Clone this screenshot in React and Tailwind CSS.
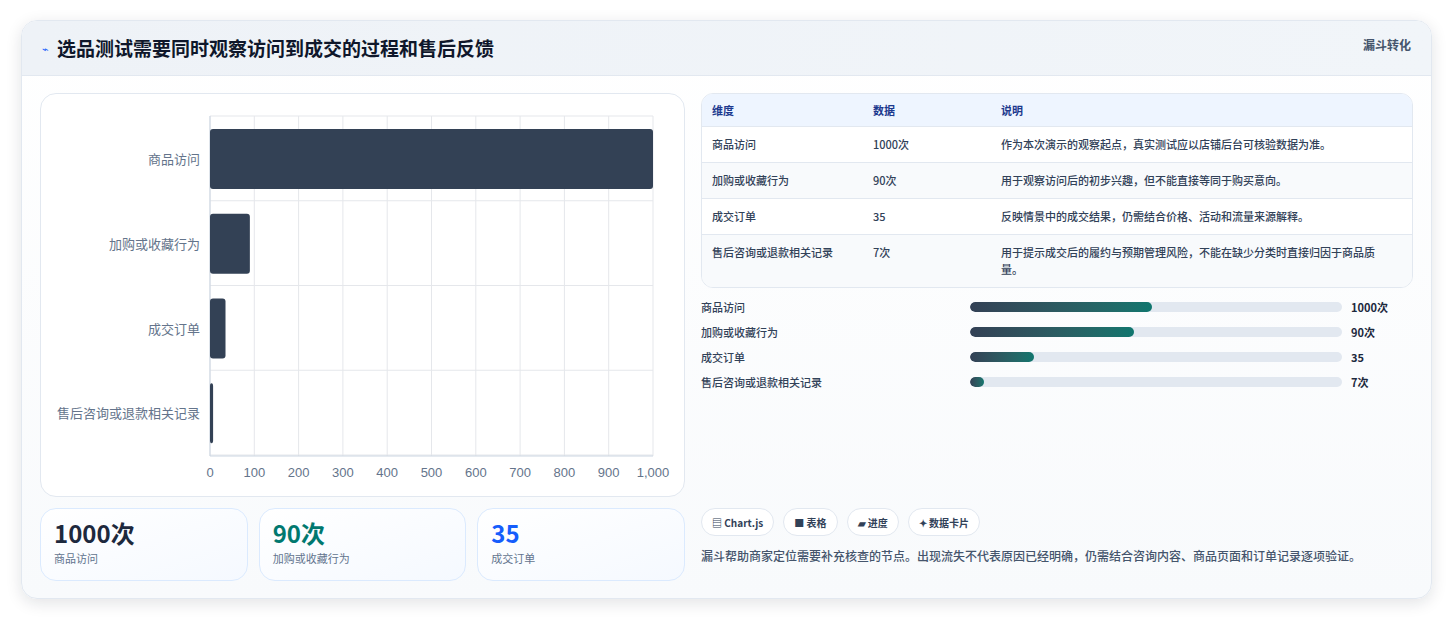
const F = { fontFamily: '"Noto Sans CJK SC", "Noto Sans", sans-serif' };

const rows = [
  { name: "商品访问", v: 1000, d: "1000次", desc: "作为本次演示的观察起点，真实测试应以店铺后台可核验数据为准。", w: 182 },
  { name: "加购或收藏行为", v: 90, d: "90次", desc: "用于观察访问后的初步兴趣，但不能直接等同于购买意向。", w: 164 },
  { name: "成交订单", v: 35, d: "35", desc: "反映情景中的成交结果，仍需结合价格、活动和流量来源解释。", w: 64 },
  { name: "售后咨询或退款相关记录", v: 7, d: "7次", desc: "用于提示成交后的履约与预期管理风险，不能在缺少分类时直接归因于商品质量。", w: 14 },
];

function Chart() {
  const x0 = 209, W = 443, top = 115, rh = 84.75;
  return (
    <svg width="644" height="403" className="block" style={{ position: "absolute", left: 0, top: 0 }}>
      {Array.from({ length: 11 }).map((_, i) => {
        const x = x0 - 40 + W * i / 10;
        return <g key={i}>
          <line x1={x} x2={x} y1={top - 93 + 0} y2={455 - 93} stroke="#e5e7eb" />
          <text x={x} y={471 - 93 + 5} textAnchor="middle" fontSize="13" fill="#64748b" fontFamily="Liberation Sans, sans-serif">{i === 10 ? "1,000" : i * 100}</text>
        </g>;
      })}
      {[0, 1, 2, 3, 4].map(i => <line key={i} x1={x0 - 40} x2={x0 - 40 + W} y1={top - 93 + rh * i} y2={top - 93 + rh * i} stroke="#e5e7eb" />)}
      <line x1={x0 - 40} x2={x0 - 40} y1={22} y2={362} stroke="#cbd5e1" />
      <line x1={x0 - 40} x2={x0 - 40 + W} y1={362} y2={362} stroke="#cbd5e1" />
      {rows.map((r, i) => {
        const y = top - 93 + rh * i + 13;
        return <g key={i}>
          <rect x={x0 - 40} y={y} width={Math.max(3, W * r.v / 1000)} height={60} rx="3" fill="#334155" />
          <text x={x0 - 50} y={y + 35} textAnchor="end" fontSize="13" fill="#64748b" style={F}>{r.name}</text>
        </g>;
      })}
    </svg>
  );
}

export default function App() {
  return (
    <div className="w-[1453px] h-[621px] bg-white pt-[20px] px-[21px]" style={F}>
      <div className="w-[1411px] h-[579px] rounded-2xl border border-slate-200 shadow-[0_4px_16px_rgba(15,23,42,0.12)] overflow-hidden bg-gradient-to-b from-white to-[#f8fafc]">
        <div className="h-[55px] flex items-center justify-between px-5 bg-gradient-to-r from-[#eef2f7] to-[#f1f5f9] border-b border-slate-200">
          <div className="flex items-center gap-2">
            <span className="text-[11px] text-blue-600">⌁</span>
            <span className="text-[19px] font-bold text-slate-900">选品测试需要同时观察访问到成交的过程和售后反馈</span>
          </div>
          <span className="text-[12px] font-bold text-slate-600 self-start mt-[15px]">漏斗转化</span>
        </div>
        <div className="flex gap-4 px-[18px] pt-[17px]">
          <div className="w-[645px] flex flex-col gap-[11px]">
            <div className="h-[404px] rounded-2xl border border-slate-200 bg-white relative"><Chart /></div>
            <div className="flex gap-[11px]">
              {[["1000次", "text-slate-800"], ["90次", "text-teal-700"], ["35", "text-blue-600"]].map(([v, c], i) => (
                <div key={i} className="w-[208px] h-[73px] rounded-2xl border border-blue-100 bg-gradient-to-br from-white to-[#f5f9ff] px-[13px] pt-[8px]">
                  <div className={`text-[24px] font-bold leading-[32px] ${c}`}>{v}</div>
                  <div className="text-[11px] text-slate-500 leading-[18px]">{rows[i].name}</div>
                </div>
              ))}
            </div>
          </div>
          <div className="w-[714px] flex flex-col">
            <div className="rounded-xl border border-slate-200 overflow-hidden text-[11px] bg-white">
              <div className="flex h-[33px] items-center bg-[#eef5ff] border-b border-slate-200 font-bold text-blue-900">
                <div className="w-[171px] pl-[10px]">维度</div><div className="w-[128px]">数据</div><div>说明</div>
              </div>
              {rows.map((r, i) => (
                <div key={i} className={`flex py-[9px] leading-[17px] text-slate-700 font-medium ${i < 3 ? "border-b border-slate-200" : ""} ${i % 2 ? "bg-[#f8fafc]" : "bg-white"}`}>
                  <div className="w-[171px] pl-[10px]">{r.name}</div><div className="w-[128px]">{r.d}</div><div className="w-[395px]">{r.desc}</div>
                </div>
              ))}
            </div>
            <div className="mt-[10px] flex flex-col gap-[7px]">
              {rows.map((r, i) => (
                <div key={i} className="flex items-center h-[18px] text-[11px] font-medium text-slate-700">
                  <div className="w-[269px]">{r.name}</div>
                  <div className="w-[372px] h-[10px] rounded-full bg-slate-200 overflow-hidden">
                    <div className="h-full rounded-full bg-gradient-to-r from-[#334155] to-[#0f766e]" style={{ width: r.w }} />
                  </div>
                  <div className="ml-[9px] font-bold text-slate-800">{r.d}</div>
                </div>
              ))}
            </div>
            <div className="mt-[117px] flex gap-[9px] text-[10px] font-bold text-slate-700">
              {["▤ Chart.js", "■ 表格", "▰ 进度", "✦ 数据卡片"].map(t => (
                <span key={t} className="h-[28px] px-[10px] flex items-center rounded-full border border-slate-200 bg-white">{t}</span>
              ))}
            </div>
            <p className="mt-[10px] text-[12px] leading-[20px] text-slate-600 font-medium">漏斗帮助商家定位需要补充核查的节点。出现流失不代表原因已经明确，仍需结合咨询内容、商品页面和订单记录逐项验证。</p>
          </div>
        </div>
      </div>
    </div>
  );
}
